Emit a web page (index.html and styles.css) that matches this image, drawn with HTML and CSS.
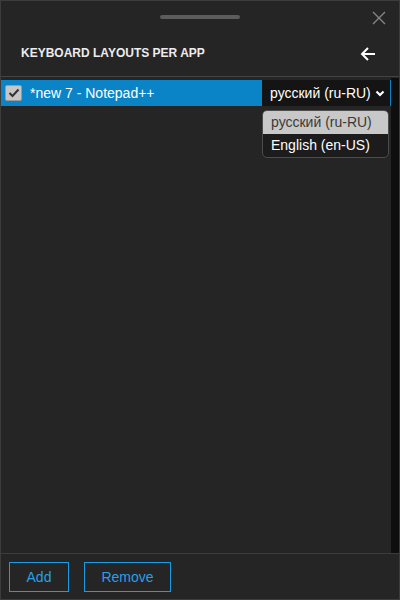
FILE: index.html
```html
<!DOCTYPE html>
<html>
<head>
<meta charset="utf-8">
<link rel="stylesheet" href="styles.css">
</head>
<body>
<div class="window">
  <div class="header">
    <div class="topbar">
      <span></span>
      <div class="grabber"></div>
      <svg class="close" width="14" height="14" viewBox="0 0 14 14"><path d="M1 1 L13 13 M13 1 L1 13" stroke="#858585" stroke-width="1.4" fill="none"/></svg>
    </div>
    <div class="titlebar">
      <div class="title">KEYBOARD LAYOUTS PER APP</div>
      <svg class="back" width="16" height="16" viewBox="0 0 16 16"><path d="M15 8 H2 M8 2 L2 8 L8 14" stroke="#ffffff" stroke-width="2" fill="none"/></svg>
    </div>
  </div>
  <div class="body">
    <div class="list">
      <div class="row">
        <div class="check"><svg width="12" height="10" viewBox="0 0 12 10"><path d="M1.5 5 L4.5 8 L10.5 1.5" stroke="#333" stroke-width="2" fill="none"/></svg></div>
        <div class="name">*new 7 - Notepad++</div>
        <div class="select">
          <span>русский (ru-RU)</span>
          <svg width="10" height="7" viewBox="0 0 10 7"><path d="M1.5 1.5 L5 5 L8.5 1.5" stroke="#fff" stroke-width="2.2" fill="none"/></svg>
        </div>
      </div>
      <div class="dropdown">
        <div class="opt sel">русский (ru-RU)</div>
        <div class="opt">English (en-US)</div>
      </div>
    </div>
    <div class="scrollbar"></div>
  </div>
  <div class="footer">
    <button class="btn add">Add</button>
    <button class="btn remove">Remove</button>
  </div>
</div>
</body>
</html>
```
FILE: styles.css
```css
html, body {
  margin: 0;
  padding: 0;
  background: #252525;
}
.window {
  width: 400px;
  height: 600px;
  box-sizing: border-box;
  border: 1px solid #3c3c3c;
  background: #252525;
  display: flex;
  flex-direction: column;
  font-family: "Liberation Sans", Arial, sans-serif;
}
.header {
  height: 75px;
  border-bottom: 1px solid #444444;
  display: flex;
  flex-direction: column;
}
.topbar {
  display: grid;
  grid-template-columns: 1fr auto 1fr;
  align-items: start;
  height: 30px;
}
.grabber {
  margin-top: 14px;
  width: 80px;
  height: 4px;
  border-radius: 2px;
  background: #5c5c5c;
}
.close {
  justify-self: end;
  margin-top: 10px;
  margin-right: 13px;
}
.titlebar {
  display: flex;
  justify-content: space-between;
  align-items: center;
  padding: 0 23px 0 20px;
  margin-top: 12px;
}
.title {
  color: #ececec;
  font-size: 12px;
  font-weight: bold;
}
.back {
  margin-top: 3px;
}
.body {
  flex: 1;
  display: flex;
}
.list {
  flex: 1;
  padding-top: 3px;
  position: relative;
}
.row {
  height: 26px;
  background: #0a84c6;
  display: flex;
  align-items: center;
  padding-right: 1px;
}
.check {
  width: 15px;
  height: 14px;
  margin-left: 4px;
  border: 1px solid #9a9a9a;
  border-radius: 2px;
  background: #c6c6c6;
  display: flex;
  align-items: center;
  justify-content: center;
}
.name {
  color: #ffffff;
  font-size: 14px;
  margin-left: 8px;
  flex: 1;
}
.select {
  width: 128px;
  height: 26px;
  background: #141414;
  display: flex;
  align-items: center;
  justify-content: space-between;
  box-sizing: border-box;
  padding: 0 5px 0 8px;
  color: #ffffff;
  font-size: 14px;
}
.dropdown {
  position: absolute;
  left: 261px;
  top: 33px;
  width: 127px;
  box-sizing: border-box;
  border: 1px solid #4c4c4c;
  border-radius: 5px;
  background: #1c1c1c;
  overflow: hidden;
}
.opt {
  height: 23px;
  line-height: 23px;
  padding-left: 8px;
  color: #ffffff;
  font-size: 14px;
}
.opt.sel {
  background: #c8c8c8;
  color: #3a3a3a;
}
.scrollbar {
  width: 8px;
  margin-top: 1px;
  background: #0e0e0e;
}
.footer {
  height: 46px;
  border-top: 1px solid #3c3c3c;
  display: flex;
  align-items: flex-start;
  gap: 15px;
  padding: 8px 0 0 8px;
  box-sizing: border-box;
}
.btn {
  height: 30px;
  background: transparent;
  border: 1px solid #1a9be4;
  color: #2a9fe8;
  font-family: "Liberation Sans", Arial, sans-serif;
  font-size: 14px;
  padding: 0;
}
.add { width: 60px; }
.remove { width: 87px; }
```
